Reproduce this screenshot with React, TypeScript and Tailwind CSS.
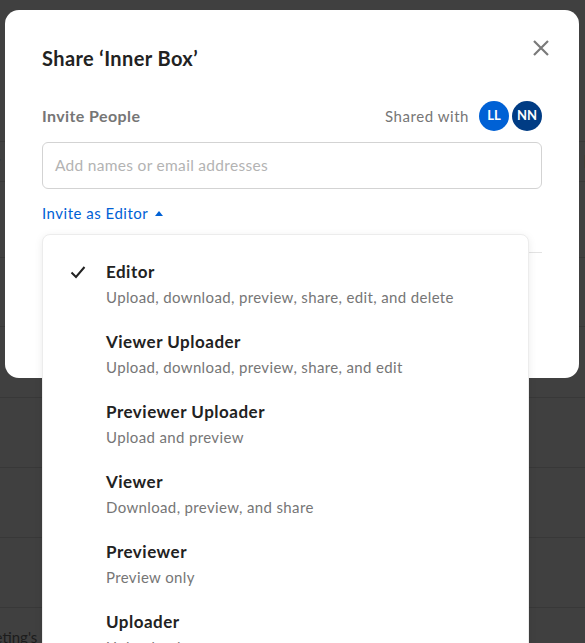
import React from "react";

type Role = { name: string; desc: string; checked?: boolean };

const roles: Role[] = [
  { name: "Editor", desc: "Upload, download, preview, share, edit, and delete", checked: true },
  { name: "Viewer Uploader", desc: "Upload, download, preview, share, and edit" },
  { name: "Previewer Uploader", desc: "Upload and preview" },
  { name: "Viewer", desc: "Download, preview, and share" },
  { name: "Previewer", desc: "Preview only" },
  { name: "Uploader", desc: "Upload only" },
];

const RoleItem: React.FC<{ role: Role }> = ({ role }) => (
  <div className="flex h-[70px] items-start pt-[26px]">
    <div className="flex w-[63px] shrink-0 justify-end pr-[20px] pt-[4px]">
      {role.checked && (
        <svg width="16" height="14" viewBox="0 0 16 14" fill="none">
          <path d="M1.5 7.5 L6 12 L14.5 2" stroke="#222" strokeWidth="2" />
        </svg>
      )}
    </div>
    <div className="flex flex-col">
      <span className="text-[17px] font-bold leading-[22px] tracking-[0.5px] text-[#222]">{role.name}</span>
      <span className="mt-[4px] text-[15px] leading-[20px] tracking-[0.36px] text-[#767676]">{role.desc}</span>
    </div>
  </div>
);

export default function App() {
  return (
    <div className="relative h-[643px] w-full overflow-hidden bg-[#404040] font-['Lato',sans-serif]">
      {/* dimmed page behind */}
      <div className="flex flex-col">
        <div className="h-[142px] border-b border-[#383838]" />
        <div className="flex h-[40px] items-center justify-between overflow-hidden border-b border-[#383838] text-[17px] text-[#1c1c1c]">
          <span className="-ml-[6px]">r</span>
          <span className="-mr-[8px]">F</span>
        </div>
        <div className="h-[76px] border-b border-[#383838]" />
        <div className="h-[69px] border-b border-[#383838]" />
        <div className="h-[71px] border-b border-[#383838]" />
        <div className="h-[70px] border-b border-[#383838]" />
        <div className="h-[70px] border-b border-[#383838]" />
        <div className="h-[70px] border-b border-[#383838]" />
        <div className="-ml-[27px] pt-[22px] text-[15px] leading-none text-[#1c1c1c]">Meeting's</div>
      </div>

      {/* modal */}
      <div className="absolute left-[5px] top-[10px] h-[368px] w-[574px] rounded-[14px] bg-white px-[37px] pt-[36px]">
        <div className="flex items-start justify-between">
          <h1 className="text-[20px] font-bold leading-[24px] tracking-[0.4px] text-[#222]">Share ‘Inner Box’</h1>
          <svg className="-mr-[7px] -mt-[6px]" width="16" height="16" viewBox="0 0 16 16" fill="none">
            <path d="M1 1 L15 15 M15 1 L1 15" stroke="#7a7a7a" strokeWidth="2.2" />
          </svg>
        </div>

        <div className="mt-[31px] flex h-[30px] items-center justify-between">
          <span className="text-[16px] font-bold tracking-[0.4px] text-[#767676]">Invite People</span>
          <div className="flex items-center">
            <span className="mr-[10px] text-[15px] tracking-[0.55px] text-[#767676]">Shared with</span>
            <div className="flex h-[30px] w-[30px] items-center justify-center rounded-full bg-[#0061d5] text-[13px] font-bold text-white">
              LL
            </div>
            <div className="ml-[3px] flex h-[30px] w-[30px] items-center justify-center rounded-full bg-[#003c84] text-[13px] font-bold text-white">
              NN
            </div>
          </div>
        </div>

        <div className="mt-[11px] flex h-[47px] items-center rounded-[6px] border border-[#d3d3d3] px-[12px]">
          <span className="text-[15.5px] tracking-[0.3px] text-[#b3b3b3]">Add names or email addresses</span>
        </div>

        <div className="mt-[14px] flex h-[20px] items-center text-[15px] tracking-[0.5px] text-[#0061d5]">
          <span>Invite as Editor</span>
          <svg className="ml-[7px]" width="8" height="5" viewBox="0 0 8 5">
            <path d="M0 5 L4 0 L8 5 Z" fill="#0061d5" />
          </svg>
        </div>

        <div className="mt-[29px] h-px w-full bg-[#e3e3e3]" />

        {/* role dropdown */}
        <div className="absolute left-[37px] top-[224px] h-[440px] w-[487px] rounded-[8px] border border-[#ececec] bg-white shadow-[0_2px_8px_rgba(0,0,0,0.08)]">
          {roles.map((r) => (
            <RoleItem key={r.name} role={r} />
          ))}
        </div>
      </div>
    </div>
  );
}
